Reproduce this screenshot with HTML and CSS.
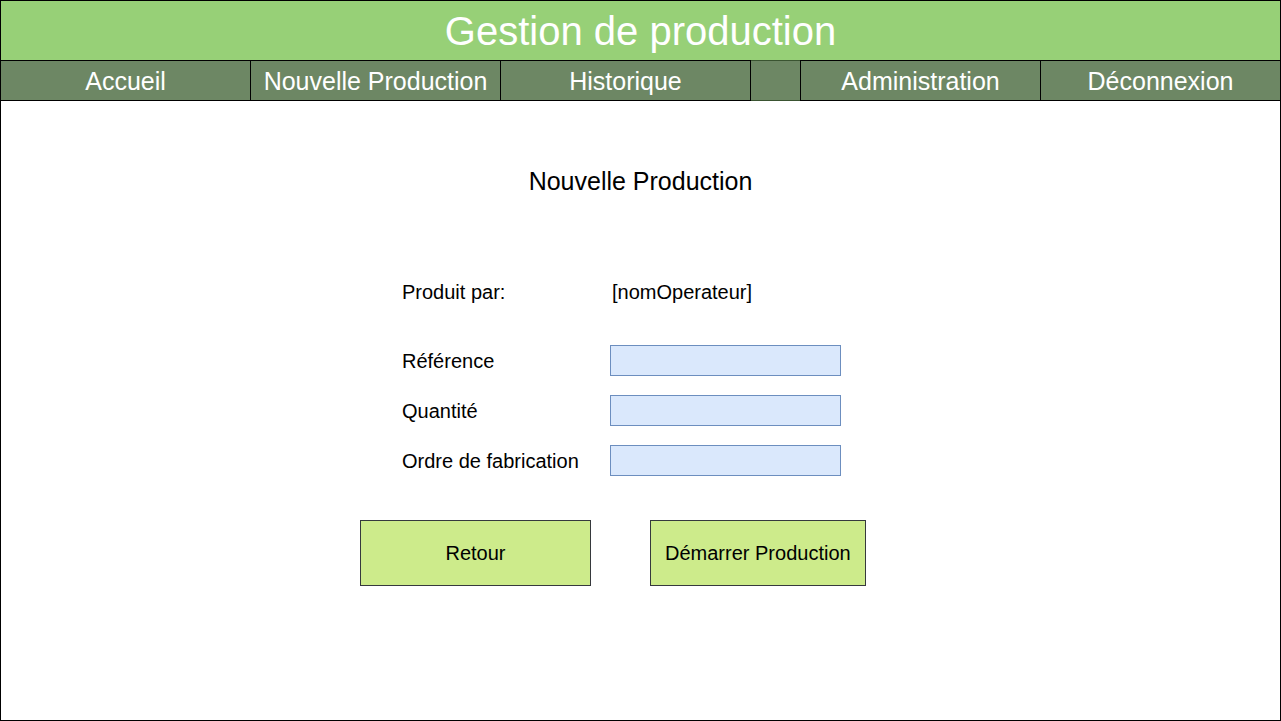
FILE: index.html
```html
<!DOCTYPE html>
<html lang="fr">
<head>
  <meta charset="utf-8">
  <meta name="viewport" content="width=device-width, initial-scale=1">
  <title>Gestion de production</title>
  <link rel="stylesheet" href="styles.css">
</head>
<body>
  <div class="page">
    <header class="banner">
      <h1 class="banner-title">Gestion de production</h1>
    </header>
    <nav class="menu">
      <a class="menu-link" href="#">Accueil</a>
      <a class="menu-link" href="#">Nouvelle Production</a>
      <a class="menu-link" href="#">Historique</a>
      <span class="menu-spacer"></span>
      <a class="menu-link menu-link-end" href="#">Administration</a>
      <a class="menu-link menu-link-end" href="#">Déconnexion</a>
    </nav>
    <main class="content">
      <h2 class="content-title">Nouvelle Production</h2>
      <form class="form">
        <div class="fields">
          <div class="row row-operator">
            <span>Produit par:</span>
            <span class="operator">[nomOperateur]</span>
          </div>
          <div class="row">
            <label for="reference">Référence</label>
            <input class="field" type="text" id="reference">
          </div>
          <div class="row">
            <label for="quantite">Quantité</label>
            <input class="field" type="text" id="quantite">
          </div>
          <div class="row">
            <label for="ordre">Ordre de fabrication</label>
            <input class="field" type="text" id="ordre">
          </div>
        </div>
        <div class="actions">
          <button class="button button-back" type="button">Retour</button>
          <button class="button" type="submit">Démarrer Production</button>
        </div>
      </form>
    </main>
  </div>
</body>
</html>
```

FILE: styles.css
```css
* {
  box-sizing: border-box;
}

body {
  margin: 0;
  background: #fff;
  color: #000;
  font-family: "Liberation Sans", Arial, sans-serif;
  font-size: 20px;
  line-height: 30px;
}

.page {
  min-height: 100vh;
  border: 1px solid #000;
}

.banner {
  padding: 5px 0 4px;
  background: #97d077;
  color: #fff;
  text-align: center;
}

.banner-title {
  margin: 0;
  font-size: 40px;
  font-weight: 400;
  line-height: 50px;
}

.menu {
  display: flex;
  background: #6d8764;
}

.menu-link {
  flex: 0 1 250px;
  border: 1px solid #000;
  border-left: 0;
  padding: 5px 0 4px;
  color: #fff;
  font-size: 25px;
  text-align: center;
  text-decoration: none;
  white-space: nowrap;
}

.menu-link-end {
  flex-basis: 240px;
  border-left: 1px solid #000;
  border-right: 0;
}

.menu-spacer {
  flex: 1;
  border: solid #3a5431;
  border-width: 1px 0;
}

.content {
  padding: 65px 16px 32px;
}

.content-title {
  margin: 0 0 80px;
  font-size: 25px;
  font-weight: 400;
  line-height: 30px;
  text-align: center;
}

.form {
  max-width: 561px;
  margin: 0 auto;
}

.fields {
  display: grid;
  gap: 19px;
  padding-left: 42px;
}

.row {
  display: grid;
  grid-template-columns: 208px 231px;
  align-items: center;
  min-height: 31px;
}

.row-operator {
  margin-bottom: 19px;
}

.operator {
  padding-left: 2px;
}

.field {
  width: 100%;
  height: 31px;
  padding: 0 6px;
  border: 1px solid #6c8ebf;
  border-radius: 0;
  background: #dae8fc;
  font: inherit;
}

.actions {
  display: flex;
  gap: 59px;
  margin-top: 44px;
}

.button {
  height: 66px;
  padding: 0 14px;
  border: 1px solid #36393d;
  border-radius: 0;
  background: #cdeb8b;
  color: #000;
  font: inherit;
}

.button-back {
  width: 231px;
}
```
